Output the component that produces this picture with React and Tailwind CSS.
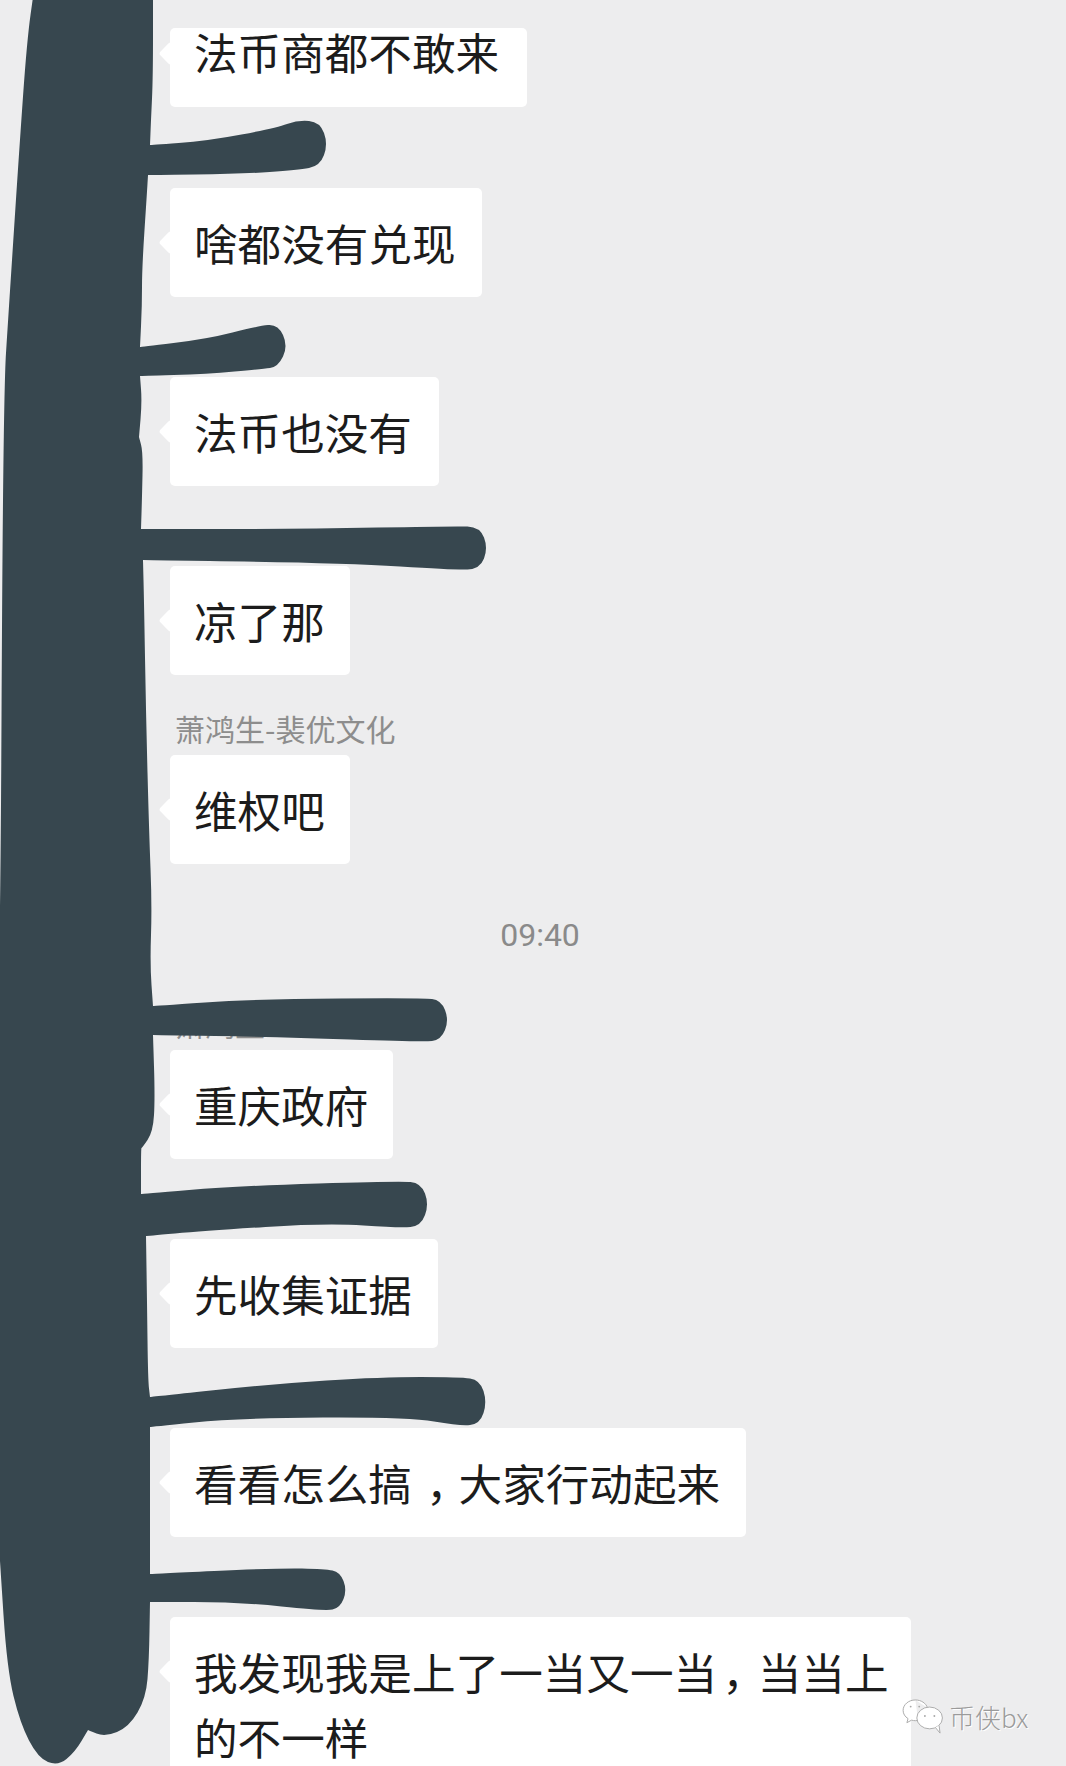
// points listed twice stay sharp corners, the rest get smoothed
const trunk = [
  [34, -10], [34, -10], [153, -10], [153, -10], [153, 77], [151, 120], [150, 145], [150, 145], [207, 141], [276, 128], [298, 120], [320, 122], [328, 144], [320, 166], [298, 170],
  [241, 174], [148, 175], [148, 175], [147, 192], [142, 268], [142, 306], [140, 347], [140, 347], [207, 339], [258, 326], [278, 324], [288, 346], [278, 367], [262, 369], [207, 374],
  [140, 376], [140, 376], [142, 402], [139, 437], [139, 437], [143, 452], [142, 498], [141, 529], [141, 529], [300, 529], [455, 526], [480, 527], [488, 548], [480, 569], [455, 570],
  [345, 563], [143, 560], [143, 560], [144, 600], [146, 715], [149, 830], [152, 906], [150, 964], [153, 1006], [153, 1006], [257, 999], [423, 998], [441, 1000], [449, 1020], [441, 1040],
  [423, 1042], [277, 1037], [153, 1035], [153, 1035], [155, 1098], [153, 1132], [142, 1148], [141, 1148], [141, 1194], [141, 1194], [237, 1186], [400, 1181], [421, 1183], [429, 1204], [421, 1226],
  [400, 1228], [327, 1223], [204, 1231], [146, 1236], [146, 1236], [147, 1300], [148, 1380], [150, 1397], [150, 1397], [272, 1384], [381, 1377], [460, 1377], [480, 1380], [487, 1402],
  [480, 1424], [460, 1426], [408, 1417], [238, 1418], [150, 1427], [150, 1427], [150, 1574], [150, 1574], [279, 1568], [325, 1569], [340, 1572], [347, 1590], [340, 1608],
  [325, 1611], [238, 1602], [150, 1602], [150, 1602], [149, 1660], [146, 1698], [129, 1727], [105, 1737], [88, 1730], [88, 1730], [75, 1752], [58, 1766],
  [38, 1758], [20, 1723], [7, 1669], [0, 1561], [0, 1561], [-10, 1561], [-10, 1561], [-10, 1040], [-10, 1040], [0, 1040], [3, 400], [9, 306], [19, 153], [27, 40],
];

// smooth the outline through the midpoints so it looks like a marker stroke
function smoothPath(points) {
  const mid = (a, b) => [(a[0] + b[0]) / 2, (a[1] + b[1]) / 2];
  const start = mid(points[points.length - 1], points[0]);
  let d = `M${start[0]} ${start[1]}`;
  points.forEach((p, i) => {
    const m = mid(p, points[(i + 1) % points.length]);
    d += ` Q${p[0]} ${p[1]} ${m[0]} ${m[1]}`;
  });
  return d + " Z";
}

function Bubble({ children, className = "" }) {
  return (
    <div className={`relative bg-white rounded-[5px] pl-[24px] py-[22px] text-[43.6px] leading-[65px] text-[#1c1c1c] whitespace-nowrap ${className}`}>
      <span className="absolute left-[-8px] top-[46px] w-[17px] h-[17px] rotate-45 rounded-[3px] bg-white"></span>
      <span className="relative">{children}</span>
    </div>
  );
}

function Message({ name, text, width }) {
  return (
    <div className="pl-[170px] pt-[36px]">
      <div className="h-10 mb-1 ml-[5px] text-[30px] leading-[34px] text-[#8d8d8d]">{name}</div>
      <Bubble className={width}>{text}</Bubble>
    </div>
  );
}

export default function App() {
  const comma = "\uFF0C";
  return (
    <div
      className="relative h-[1766px] overflow-hidden bg-[#ededee]"
      style={{ fontFamily: '"Noto Sans CJK SC", "Noto Sans", sans-serif' }}
    >
      {/* first bubble is cut by the crop, so its text sits higher */}
      <div className="pl-[170px] pt-[28px] pb-px">
        <div className="relative h-[79px] w-[357px] bg-white rounded-[5px] pl-[24px] text-[43.6px] leading-[47px] text-[#1c1c1c] whitespace-nowrap">
          <span className="absolute left-[-8px] top-[17px] w-[17px] h-[17px] rotate-45 rounded-[3px] bg-white"></span>
          <span className="relative">法币商都不敢来</span>
        </div>
      </div>

      <Message name="" text="啥都没有兑现" width="w-[312px]" />
      <Message name="" text="法币也没有" width="w-[269px]" />
      <Message name="" text="凉了那" width="w-[180px]" />
      <Message name="萧鸿生-裴优文化" text="维权吧" width="w-[180px]" />

      <div className="mt-[51px] h-10 pl-[14px] text-center text-[32px] leading-10 text-[#8a8a8a]" style={{ fontFamily: '"Roboto", sans-serif' }}>
        09:40
      </div>

      <div className="pl-[170px] pt-[51px]">
        <div className="h-10 mb-1 ml-[5px] text-[30px] leading-[34px] text-[#8d8d8d]">萧鸿生</div>
        <Bubble className="w-[223px]">重庆政府</Bubble>
      </div>

      <Message name="" text="先收集证据" width="w-[268px]" />
      <Message
        name=""
        text={<>看看怎么搞<span className="inline-block translate-x-[14px] mr-[3px]">{comma}</span>大家行动起来</>}
        width="w-[576px]"
      />
      <Message
        name=""
        text={<>我发现我是上了一当又一当<span className="inline-block translate-x-[5px] mr-[-3px]">{comma}</span>当当上<br />的不一样</>}
        width="w-[741px]"
      />

      {/* marker scribble over names and avatars */}
      <svg className="absolute left-0 top-0" width="1066" height="1766" viewBox="0 0 1066 1766">
        <path d={smoothPath(trunk)} fill="#37474f" />
      </svg>

      {/* watermark */}
      <div className="absolute left-[902px] top-[1699px] flex items-center gap-[5px]">
        <svg width="42" height="36" viewBox="0 0 44 38" fill="#ffffff" stroke="#a8a8a8" strokeWidth="1">
          <path d="M14 1C6.800 1 1 5.900 1 12c0 3.600 2 6.700 5.200 8.700L5 25l5-2.700c1.300.4 2.700.6 4 .6 1 0 1.900-.1 2.800-.3" />
          <path d="M14 1c6 0 11.200 3.500 12.700 8.200" />
          <ellipse cx="29" cy="20" rx="13.500" ry="11.500" />
          <path d="M35 30l5 6-1-8" />
          <circle cx="9" cy="8" r="1" fill="#a8a8a8" stroke="none" />
          <circle cx="18" cy="8" r="1" fill="#a8a8a8" stroke="none" />
          <circle cx="24" cy="18" r="1" fill="#a8a8a8" stroke="none" />
          <circle cx="34" cy="18" r="1" fill="#a8a8a8" stroke="none" />
        </svg>
        <span className="text-[26px] leading-8 font-light text-[#9b9b9b] [text-shadow:1px_1px_0_#ffffff]">币侠bx</span>
      </div>
    </div>
  );
}
